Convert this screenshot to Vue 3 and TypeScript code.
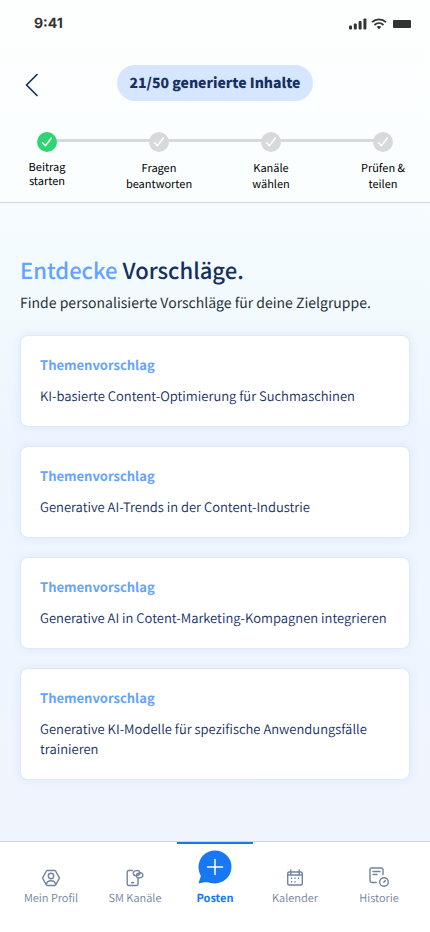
<script setup lang="ts">
import { ref } from 'vue'

interface Step { lines: [string, string]; done: boolean }

const steps: Step[] = [
  { lines: ['Beitrag', 'starten'], done: true },
  { lines: ['Fragen', 'beantworten'], done: false },
  { lines: ['Kanäle', 'wählen'], done: false },
  { lines: ['Prüfen &', 'teilen'], done: false },
]

const suggestions: string[] = [
  'KI-basierte Content-Optimierung für Suchmaschinen',
  'Generative AI-Trends in der Content-Industrie',
  'Generative AI in Cotent-Marketing-Kompagnen integrieren',
  'Generative KI-Modelle für spezifische Anwendungsfälle trainieren',
]

const tabs = [
  { id: 'profile', label: 'Mein Profil' },
  { id: 'channels', label: 'SM Kanäle' },
  { id: 'post', label: 'Posten' },
  { id: 'calendar', label: 'Kalender' },
  { id: 'history', label: 'Historie' },
]
const active = ref('post')
</script>

<template>
  <div class="screen">
    <header class="header">
      <div class="status">
        <span class="time">9:41</span>
        <div class="indicators">
          <svg width="18" height="12" viewBox="0 0 18 12" fill="#333">
            <rect x="0" y="7.5" width="3" height="4" rx="1" />
            <rect x="4.8" y="5.5" width="3" height="6" rx="1" />
            <rect x="9.6" y="3" width="3" height="8.5" rx="1" />
            <rect x="14.4" y="0.5" width="3" height="11" rx="1" />
          </svg>
          <svg width="16" height="12" viewBox="0 0 16 12" fill="none" stroke="#333" stroke-width="1.8">
            <path d="M1 4.2C5 .3 11 .3 15 4.2" />
            <path d="M3.5 7c2.6-2.5 6.400-2.500 9 0" />
            <path d="M5.600 8.800c1.400-1.200 3.400-1.200 4.800 0L8 11.300z" fill="#333" stroke="none" />
          </svg>
          <span class="battery"></span>
        </div>
      </div>

      <div class="topbar">
        <button class="back" type="button" aria-label="Zurück">
          <svg width="14" height="24" viewBox="0 0 14 24" fill="none" stroke="#15305f" stroke-width="1.7" stroke-linecap="round" stroke-linejoin="round">
            <path d="M12 1.500L1.500 12 12 22.500" />
          </svg>
        </button>
        <span class="quota">21/50 generierte Inhalte</span>
      </div>

      <ol class="steps">
        <li v-for="step in steps" :key="step.lines[0]" class="step" :class="{ done: step.done }">
          <span class="dot">
            <svg width="20" height="20" viewBox="0 0 20 20" fill="none" stroke="#fff" stroke-width="1.500" stroke-linecap="round" stroke-linejoin="round">
              <path d="M5.500 10.800l2.900 3 6-7.800" />
            </svg>
          </span>
          <span class="step-label">{{ step.lines[0] }}<br />{{ step.lines[1] }}</span>
        </li>
      </ol>
    </header>

    <main class="content">
      <h1><span class="accent">Entdecke</span> Vorschläge.</h1>
      <p class="intro">Finde personalisierte Vorschläge für deine Zielgruppe.</p>
      <div class="cards">
        <button v-for="text in suggestions" :key="text" class="card" type="button">
          <span class="card-title">Themenvorschlag</span>
          <span class="card-text">{{ text }}</span>
        </button>
      </div>
    </main>

    <nav class="tabs">
      <button
        v-for="tab in tabs"
        :key="tab.id"
        class="tab"
        :class="{ active: tab.id === active }"
        type="button"
        @click="active = tab.id"
      >
        <svg v-if="tab.id === 'profile'" width="18" height="18" viewBox="0 0 18 18" class="icon">
          <path d="M5.200 1.500h7.600a1 1 0 0 1 .8.5l3.500 6.300a1.300 1.300 0 0 1 0 1.300L13.600 16a1 1 0 0 1-.8.500H5.200a1 1 0 0 1-.8-.5L.9 9.600a1.300 1.300 0 0 1 0-1.300L4.400 2a1 1 0 0 1 .8-.5z" />
          <circle cx="9" cy="7" r="2.700" />
          <path d="M4.300 15.500c.5-2.600 2.200-3.700 4.700-3.700s4.200 1.100 4.700 3.700" />
        </svg>
        <svg v-else-if="tab.id === 'channels'" width="18" height="18" viewBox="0 0 18 18" class="icon">
          <path d="M6.500 1.500H2.700A1.500 1.500 0 0 0 1.200 3v12a1.500 1.500 0 0 0 1.500 1.500h7.800A1.500 1.500 0 0 0 12 15V9.500" />
          <rect x="7.300" y="1.700" width="6.500" height="4.800" rx="2.400" transform="rotate(-12 10.500 4)" />
          <rect x="10.300" y="4" width="6.500" height="4.800" rx="2.400" transform="rotate(-12 13.500 6)" />
          <path d="M6 13.600h1.300" stroke-width="1.800" />
        </svg>
        <svg v-else-if="tab.id === 'post'" width="34" height="34" viewBox="0 0 34 34">
          <path d="M17 .5a16.400 16.400 0 1 1 0 32.900c-3.300 0-5.700-.8-8.200-1.200-2.600-.3-5.100.5-8.100 1.200.4-3 1.400-4.700 2.200-7.500C1.500 23.500.5 20.500.5 17A16.400 16.400 0 0 1 17 .5z" fill="#1877f2" />
          <path d="M17 9.500v15M9.500 17h15" stroke="#fff" stroke-width="1.500" stroke-linecap="round" />
        </svg>
        <svg v-else-if="tab.id === 'calendar'" width="18" height="18" viewBox="0 0 18 18" class="icon">
          <rect x="1.700" y="3" width="14.600" height="13" rx="1.500" />
          <path d="M1.700 6h14.600M4.800 1v4M13.200 1v4" />
          <path d="M5 9.200h1.200M8.400 9.200h1.200M11.800 9.200H13M5 12.800h1.200M8.400 12.800h1.200" stroke-width="1.500" stroke-linecap="butt" />
        </svg>
        <svg v-else width="20" height="20" viewBox="0 0 20 20" class="icon">
          <path d="M7.200 15.500H3A2 2 0 0 1 1 13.500V2.500A1.500 1.500 0 0 1 2.500 1h10A1.500 1.500 0 0 1 14 2.500v5.200M4 4.500h7M4 7.500h4" />
          <circle cx="15" cy="15" r="4.300" />
          <path d="M14.800 15.300l1.600-1.800" />
        </svg>
        <span>{{ tab.label }}</span>
      </button>
    </nav>
  </div>
</template>

<style>
body {
  margin: 0;
}
</style>

<style scoped>
.screen {
  box-sizing: border-box;
  min-height: 100vh;
  display: flex;
  flex-direction: column;
  font-family: "Noto Sans CJK SC", "Noto Sans", sans-serif;
  text-rendering: geometricPrecision;
  color: #15305f;
  background: linear-gradient(180deg, #fff 0, #f5fbff 220px, #f2fafd 310px, #edf5ff 440px, #eff6ff 600px, #f0f4fd 800px);
}
button {
  font-family: inherit;
  text-rendering: inherit;
  color: inherit;
  border: 0;
  background: none;
  padding: 0;
  cursor: pointer;
}
.header {
  border-bottom: 1px solid #d2d7df;
  background: linear-gradient(180deg, #fdfefe, #fafeff);
}
.status {
  box-sizing: border-box;
  display: flex;
  align-items: center;
  justify-content: space-between;
  height: 46px;
  padding: 1px 19px 0 34px;
}
.time {
  font: 700 14px/20px Inter, sans-serif;
  color: #333;
}
.indicators {
  display: flex;
  align-items: center;
  gap: 4px;
}
.battery {
  width: 18px;
  height: 8px;
  margin-left: 2px;
  border-radius: 1px;
  background: #333;
}
.topbar {
  display: grid;
  grid-template-columns: 1fr auto 1fr;
  align-items: center;
  padding: 19px 25px 0;
}
.back {
  display: flex;
  width: 14px;
  padding-top: 4px;
}
.quota {
  padding: 0 13px;
  border-radius: 18px;
  background: #d7e6ff;
  font-size: 14px;
  font-weight: 900;
  line-height: 36px;
}
.steps {
  display: flex;
  justify-content: space-between;
  list-style: none;
  margin: 0;
  padding: 31px 14px 10px;
  position: relative;
}
.steps::before {
  content: "";
  position: absolute;
  top: 38px;
  left: 47px;
  right: 47px;
  height: 3px;
  background: #d8d9db;
}
.step {
  position: relative;
  display: flex;
  flex-direction: column;
  align-items: center;
  gap: 8px;
  width: 66px;
  color: #000;
}
.dot {
  width: 20px;
  height: 20px;
  border-radius: 50%;
  background: #d8d9db;
}
.dot svg {
  display: block;
}
.done .dot {
  background: #2ed573;
}
.step-label {
  font-size: 11px;
  font-weight: 400;
  line-height: 16px;
  text-align: center;
  white-space: nowrap;
}
.done .step-label {
  line-height: 14px;
}
.content {
  flex: 1;
  padding: 51px 20px 20px;
}
h1 {
  margin: 0;
  font-size: 22px;
  font-weight: 500;
  line-height: 32px;
}
.accent {
  color: #66a3ff;
}
.intro {
  margin: 5px 0 20px;
  font-size: 14px;
  line-height: 24px;
  color: #263238;
}
.cards {
  display: flex;
  flex-direction: column;
  gap: 19px;
}
.card {
  display: flex;
  flex-direction: column;
  gap: 11px;
  padding: 19px 19px 20px;
  border: 1px solid #e3e9f1;
  border-radius: 8px;
  background: #fff;
  box-shadow: 0 0 10px #d9e8fc;
  text-align: left;
  font-size: 13px;
  font-weight: 350;
  line-height: 20px;
}
.card-title {
  font-weight: 700;
  color: #66a3ff;
}
.tabs {
  display: grid;
  grid-template-columns: 1fr 1fr 76px 1fr 1fr;
  height: 90px;
  padding: 0 9px;
  border-top: 1px solid #cdd3e0;
  background: #fff;
}
.tab {
  display: flex;
  flex-direction: column;
  align-items: center;
  justify-content: flex-end;
  gap: 2px;
  padding-bottom: 25px;
  font-size: 11px;
  font-weight: 350;
  line-height: 18px;
  color: #72849f;
}
.tab.active {
  gap: 5px;
  border-top: 2px solid #1877f2;
  color: #1877f2;
  font-weight: 700;
}
.icon {
  fill: none;
  stroke: #72849f;
  stroke-width: 1.4;
  stroke-linecap: round;
  stroke-linejoin: round;
}
</style>
